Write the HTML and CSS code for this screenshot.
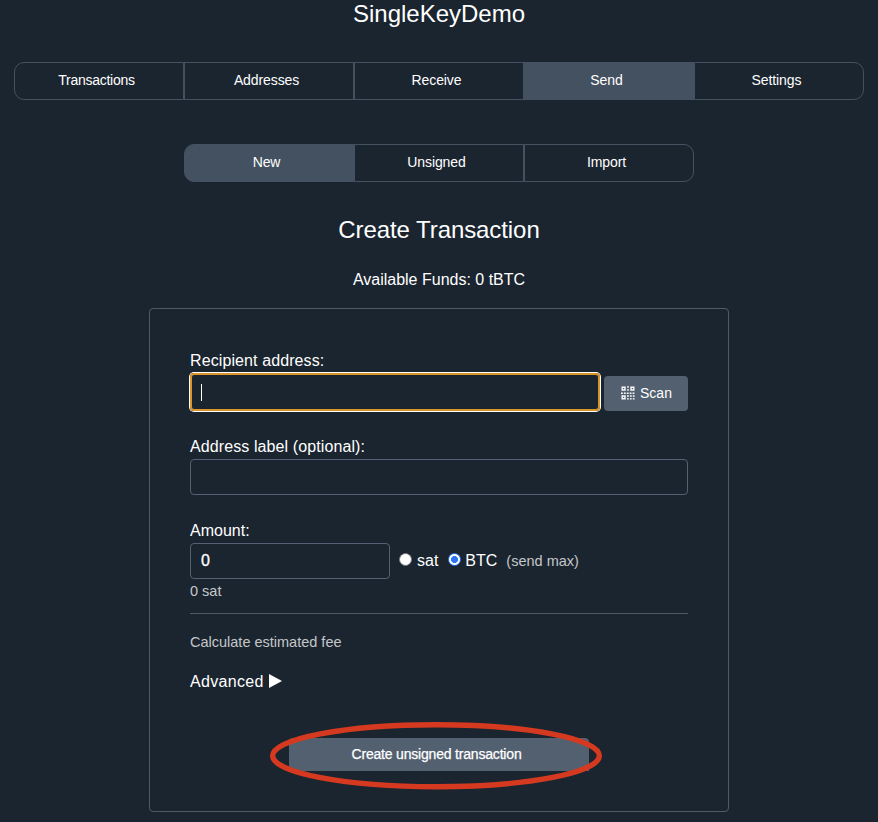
FILE: index.html
```html
<!DOCTYPE html>
<html lang="en">
<head>
<meta charset="utf-8">
<title>SingleKeyDemo</title>
<link rel="stylesheet" href="styles.css">
</head>
<body>
<h1>SingleKeyDemo</h1>
<nav class="tabs main-tabs">
  <a class="tab transactions">Transactions</a>
  <a class="tab">Addresses</a>
  <a class="tab">Receive</a>
  <a class="tab active">Send</a>
  <a class="tab">Settings</a>
</nav>
<nav class="tabs sub-tabs">
  <a class="tab active">New</a>
  <a class="tab">Unsigned</a>
  <a class="tab">Import</a>
</nav>
<h2>Create Transaction</h2>
<p class="funds">Available Funds: 0 tBTC</p>
<form class="card">
  <label class="label label-recipient">Recipient address:</label>
  <div class="recipient">
    <div class="field focused"><span class="caret"></span></div>
    <button type="button" class="scan">
      <svg width="14" height="14" viewBox="0 0 14 14" fill="none" stroke="#fff">
        <path stroke-width="1.4" d="M1.2 1.2h2.8v2.8H1.2zM10 1.2h2.8v2.8H10zM1.2 10h2.8v2.8H1.2z"/>
        <path stroke-width="1.4" stroke-dasharray="1.8 1.1" d="M7 0v5M0 7.2h14M6 10h8M6 12.9h8"/>
      </svg>
      <span>Scan</span>
    </button>
  </div>
  <label class="label label-optional">Address label (optional):</label>
  <div class="field"></div>
  <label class="label label-amount">Amount:</label>
  <div class="amount">
    <div class="field value">0</div>
    <span class="radio"></span><span class="unit">sat</span>
    <span class="radio checked"></span><span class="unit">BTC</span>
    <span class="note max">(send max)</span>
  </div>
  <div class="note converted">0 sat</div>
  <hr>
  <div class="note fee">Calculate estimated fee</div>
  <div class="advanced"><span>Advanced</span><svg width="13" height="14" viewBox="0 0 13 14"><path fill="#fff" d="M0 0l13 7-13 7z"/></svg></div>
  <div class="submit-wrap">
    <button type="button" class="submit">Create unsigned transaction</button>
    <svg class="ring" width="334" height="70" viewBox="0 0 334 70"><ellipse cx="167" cy="34.7" rx="163.3" ry="31" fill="none" stroke="#d53a20" stroke-width="5.4"/></svg>
  </div>
</form>
</body>
</html>
```
FILE: styles.css
```css
* { box-sizing: border-box; }
body {
  margin: 0;
  height: 822px;
  overflow: hidden;
  background: #1b2530;
  color: #fff;
  font: 16px/20px "Liberation Sans", Arial, sans-serif;
}
h1, h2 { margin: 0; font-size: 24px; line-height: 28px; font-weight: 400; text-align: center; }
h2 { margin-top: 34px; letter-spacing: -.08px; }
.tabs {
  display: grid;
  grid-auto-flow: column;
  grid-auto-columns: 1fr;
  height: 38px;
  margin: 34px auto 0;
}
.main-tabs { width: 850px; }
.sub-tabs { width: 510px; margin-top: 44px; }
.tab {
  padding-right: 5px;
  border: 1px solid #445160;
  font-size: 14px;
  line-height: 35px;
  letter-spacing: -.1px;
  text-align: center;
}
.transactions { letter-spacing: -.27px; }
.tab:first-child { border-radius: 10px 0 0 10px; }
.tab:last-child { border-radius: 0 10px 10px 0; }
.tab.active { background: #445160; }
.funds { margin: 26px 0 18px; text-align: center; }
.card {
  width: 580px;
  height: 504px;
  margin: 0 auto;
  padding: 42px 40px 0;
  border: 1px solid #4b5b69;
  border-radius: 4px;
}
.label { display: block; height: 20px; }
.label-recipient, .label-optional { letter-spacing: .1px; }
.recipient { display: flex; justify-content: space-between; margin: 2px 0 26px; }
.field { height: 36px; border: 1px solid #536172; border-radius: 4px; }
.field.focused {
  width: 410px;
  height: 38px;
  border: 2px solid #dc952b;
  box-shadow: 0 0 0 1px #fff;
  padding: 9px 0 0 9px;
}
.caret { display: block; width: 1px; height: 17px; background: #fff; }
button { border: 0; color: #fff; background: #536070; font: 14px "Liberation Sans", Arial, sans-serif; }
.scan {
  display: flex;
  align-items: center;
  justify-content: center;
  gap: 5px;
  width: 84px;
  height: 35px;
  margin-top: 3px;
  padding: 0 0 1px 1px;
  border-radius: 4px;
}
.label-optional { height: 22px; }
.label-amount { margin-top: 26px; height: 22px; }
.amount { display: flex; align-items: center; }
.value { width: 200px; padding: 7px 10px; -webkit-text-stroke: .3px #fff; }
.radio { width: 13px; height: 13px; margin: -3px 5px 0 9px; border: 1px solid #777; border-radius: 50%; background: #fff; }
.checked { margin-left: 10px; margin-right: 4px; border-color: #2a74f5; background: radial-gradient(circle, #2a74f5 0 3.2px, #fff 3.8px); }
.note { color: #c5c7c9; font-size: 14.5px; }
.max { margin-left: 9px; }
.converted { margin-top: 2px; }
hr { margin: 12px 0 18px; border: 0; border-top: 1px solid #4b5b69; }
.advanced { display: flex; align-items: center; gap: 5px; margin-top: 20px; letter-spacing: .33px; }
.advanced svg { margin-top: -3px; }
.submit-wrap { position: relative; width: 300px; margin: 46px auto 0; }
.submit {
  display: block;
  width: 300px;
  height: 33px;
  padding: 0 5px 1px 0;
  border-radius: 4px 4px 0 0;
  letter-spacing: -.19px;
  -webkit-text-stroke: .25px #fff;
}
.ring { position: absolute; left: -20px; top: -17px; }
```
